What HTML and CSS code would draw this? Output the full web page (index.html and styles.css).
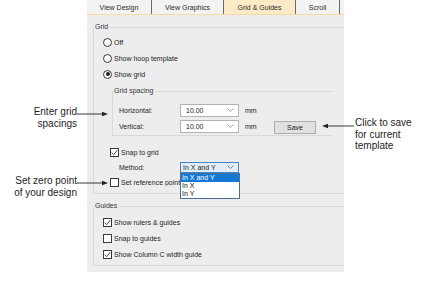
FILE: index.html
```html
<!DOCTYPE html>
<html lang="en">
<head>
<meta charset="UTF-8" />
<title>Grid &amp; Guides</title>
<link rel="stylesheet" href="styles.css">
</head>
<body>
<div class="stage">
  <section class="dialog">
    <nav class="tabs">
      <span class="tab tab-design">View Design</span>
      <span class="tab tab-graphics">View Graphics</span>
      <span class="tab tab-grid active">Grid &amp; Guides</span>
      <span class="tab tab-scroll">Scroll</span>
    </nav>

    <div class="sheet">
      <fieldset class="group group-grid">
        <legend>Grid</legend>
        <div class="row opt"><span class="radio"></span>Off</div>
        <div class="row opt"><span class="radio"></span>Show hoop template</div>
        <div class="row opt"><span class="radio on"></span>Show grid</div>

        <fieldset class="group spacing">
          <legend>Grid spacing</legend>
          <div class="row field">
            <span class="field-label">Horizontal:</span>
            <span class="combo">10.00<svg class="chev" width="7" height="4" viewBox="0 0 7 4"><polyline points="0.5,0.5 3.5,3.5 6.5,0.5" /></svg></span>
            <span class="unit">mm</span>
          </div>
          <div class="row field">
            <span class="field-label">Vertical:</span>
            <span class="combo">10.00<svg class="chev" width="7" height="4" viewBox="0 0 7 4"><polyline points="0.5,0.5 3.5,3.5 6.5,0.5" /></svg></span>
            <span class="unit">mm</span>
            <button class="save" type="button">Save</button>
          </div>
        </fieldset>

        <div class="row opt sub snap"><span class="check on"><svg width="7" height="7" viewBox="0 0 7 7"><polyline points="0.8,3.6 2.7,5.6 6.3,1.2" /></svg></span>Snap to grid</div>
        <div class="row field method">
          <span class="field-label">Method:</span>
          <span class="combo open">In X and Y<svg class="chev" width="7" height="4" viewBox="0 0 7 4"><polyline points="0.5,0.5 3.5,3.5 6.5,0.5" /></svg>
            <ul class="droplist">
              <li class="picked">In X and Y</li>
              <li>In X</li>
              <li>In Y</li>
            </ul>
          </span>
        </div>
        <div class="row opt sub refpoint"><span class="check"></span><span class="clip">Set reference point</span></div>
      </fieldset>

      <fieldset class="group group-guides">
        <legend>Guides</legend>
        <div class="row opt"><span class="check on"><svg width="7" height="7" viewBox="0 0 7 7"><polyline points="0.8,3.6 2.7,5.6 6.3,1.2" /></svg></span>Show rulers &amp; guides</div>
        <div class="row opt"><span class="check"></span>Snap to guides</div>
        <div class="row opt"><span class="check on"><svg width="7" height="7" viewBox="0 0 7 7"><polyline points="0.8,3.6 2.7,5.6 6.3,1.2" /></svg></span>Show Column C width guide</div>
      </fieldset>
    </div>
  </section>

  <!-- callouts -->
  <div class="callout callout-spacing">
    <p class="note note-left">Enter grid<br>spacings</p>
    <svg class="arrow" width="31" height="8" viewBox="0 0 31 8"><line x1="0" y1="4" x2="27" y2="4" /><polygon points="31,4 25,1.8 25,6.2" /></svg>
  </div>
  <div class="callout callout-zero">
    <p class="note note-left">Set zero point<br>of your design</p>
    <svg class="arrow" width="31" height="8" viewBox="0 0 31 8"><line x1="0" y1="4" x2="27" y2="4" /><polygon points="31,4 25,1.8 25,6.2" /></svg>
  </div>
  <div class="callout callout-save">
    <svg class="arrow" width="34" height="8" viewBox="0 0 34 8"><polygon points="1,4 7,1.8 7,6.2" /><line x1="5" y1="4" x2="33" y2="4" /></svg>
    <p class="note">Click to save<br>for current<br>template</p>
  </div>
</div>
</body>
</html>
```

FILE: styles.css
```css
* {
  box-sizing: border-box;
}
html, body {
  margin: 0;
  padding: 0;
  background: #fff;
}
body {
  font-family: 'Liberation Sans', Arial, sans-serif;
  color: #1e1e1e;
}

.stage {
  position: relative;
  width: 436px;
  height: 290px;
}

/* Dialog panel */
.dialog {
  margin-left: 87px;
  width: 257px;
  background: #ededed;
  font-size: 7px;
  overflow: hidden;
}

/* Tab strip */
.tabs {
  display: flex;
  height: 15px;
  background: #f3f3f3;
  border-bottom: 1px solid #f5dba3;
}
.tab {
  display: flex;
  align-items: center;
  justify-content: center;
  height: 14px;
  border-right: 1px solid #6a6a6a;
  color: #2b2b2b;
}
.tab-design { width: 65px; }
.tab-graphics { width: 72px; }
.tab-grid { width: 72px; }
.tab-scroll { width: 44px; }
.tab.active {
  background: #fcebc6;
}

/* Sheet body */
.sheet {
  padding: 0 0 6px 6px;
}

.group {
  margin: 0;
  padding: 0;
  border: 1px solid #d9d9d9;
  border-right: 0;
  min-width: 0;
}
.group legend {
  padding: 0 2px 0 1px;
  margin-left: 0;
  line-height: 10px;
  color: #333;
}
.group-grid {
  margin-top: 7px;
  padding: 2px 0 3px;
}
.group-guides {
  margin-top: 7px;
  padding: 3px 0 3px;
}

.row {
  display: flex;
  align-items: center;
  height: 16px;
  white-space: nowrap;
}
.opt {
  padding-left: 9px;
}
.opt.sub {
  padding-left: 16px;
}

/* Radio and checkbox */
.radio {
  width: 9px;
  height: 9px;
  margin-right: 2px;
  border: 1px solid #3a3a3a;
  border-radius: 50%;
  background: #fff;
  position: relative;
}
.radio.on::after {
  content: "";
  position: absolute;
  left: 1.5px;
  top: 1.5px;
  width: 4px;
  height: 4px;
  border-radius: 50%;
  background: #222;
}
.check {
  display: flex;
  align-items: center;
  justify-content: center;
  flex: none;
  width: 9px;
  height: 9px;
  margin-right: 2px;
  border: 1px solid #3a3a3a;
  background: #fff;
}
.check svg polyline {
  fill: none;
  stroke: #333;
  stroke-width: 0.9;
}

/* Grid spacing group */
.spacing {
  margin: 4px 11px 0 18px;
  padding: 6px 0 1px;
}
.field {
  padding-left: 6px;
}
.field.method {
  height: 14px;
  padding-left: 25px;
}
.field-label {
  width: 61px;
}
.combo {
  position: relative;
  display: flex;
  align-items: center;
  justify-content: space-between;
  width: 59px;
  height: 13px;
  padding: 0 4px 0 5px;
  background: #fff;
  border: 1px solid #b4b4b4;
}
.chev polyline {
  fill: none;
  stroke: #8a8a8a;
  stroke-width: 0.8;
}
.unit {
  width: 35px;
  padding-left: 6px;
}
.save {
  width: 42px;
  height: 13px;
  padding: 0;
  margin-top: 3px;
  font: inherit;
  color: #222;
  background: #e1e1e1;
  border: 1px solid #adadad;
}
.snap {
  margin-top: 8px;
}

/* the open dropdown hides the end of this label */
.refpoint .clip {
  width: 59px;
  overflow: hidden;
}

/* Method dropdown, shown open */
.combo.open {
  height: 11px;
  padding-left: 2px;
  background: #e3eef9;
  border-color: #3b86d0;
}
.combo.open .chev polyline {
  stroke: #5a6a7a;
}
.droplist {
  position: absolute;
  left: -1px;
  top: 10px;
  width: 60px;
  margin: 0;
  padding: 0;
  list-style: none;
  background: #fff;
  border: 1px solid #4b6e94;
  z-index: 2;
}
.droplist li {
  height: 8.3px;
  line-height: 8.3px;
  padding-left: 1px;
  color: #111;
}
.droplist li.picked {
  background: #1479d4;
  color: #fff;
}

/* Callouts around the dialog */
.callout {
  position: absolute;
  display: flex;
  align-items: flex-start;
}
.callout-spacing {
  left: 0;
  top: 106px;
}
.callout-zero {
  left: 0;
  top: 175px;
}
.callout-save {
  left: 321px;
  top: 117px;
}
.note {
  margin: 0;
  font-size: 10px;
  line-height: 11.6px;
  color: #222;
}
.note-left {
  width: 77px;
  text-align: right;
}
.callout .arrow {
  margin-top: 4px;
}
.callout-save .arrow {
  margin-top: 5px;
}
.arrow line {
  stroke: #222;
  stroke-width: 0.9;
}
.arrow polygon {
  fill: #222;
}
```
